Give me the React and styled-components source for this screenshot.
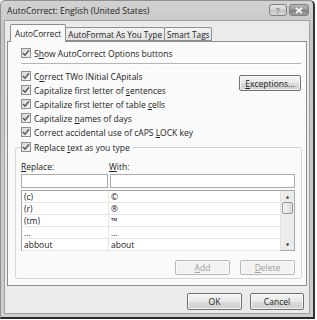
import React from "react";
import styled, { createGlobalStyle } from "styled-components";

const options = [
  { label: <>C<u>o</u>rrect TWo INitial CApitals</> },
  { label: <>Capitalize first letter of <u>s</u>entences</> },
  { label: <>Capitalize first letter of table <u>c</u>ells</> },
  { label: <>Capitalize <u>n</u>ames of days</> },
  { label: <>Correct accidental use of cAPS <u>L</u>OCK key</> },
];

const entries = [
  ["(c)", "©"],
  ["(r)", "®"],
  ["(tm)", "™"],
  ["...", "…"],
  ["abbout", "about"],
];

const Check = () => (
  <CheckBox>
    <svg width="8" height="8" viewBox="0 0 8 8">
      <path d="M1 4 L3 6.2 L7 1.2" fill="none" stroke="#5a5a5a" strokeWidth="1.5" />
    </svg>
  </CheckBox>
);

const App = () => {
  return (
    <Window>
      <GlobalStyle />
      <TitleBar>
        <Title>AutoCorrect: English (United States)</Title>
        <TitleButtons>
          <CaptionButton>?</CaptionButton>
          <CaptionButton $close>
            <svg width="8" height="7" viewBox="0 0 8 7">
              <path d="M1 1 L7 6 M7 1 L1 6" stroke="#f4f4f4" strokeWidth="1.8" />
            </svg>
          </CaptionButton>
        </TitleButtons>
      </TitleBar>
      <Body>
        <Tabs>
          <Tab $active>AutoCorrect</Tab>
          <Tab>AutoFormat As You Type</Tab>
          <Tab>Smart Tags</Tab>
        </Tabs>
        <Panel>
          <CheckRow>
            <Check />
            <span>S<u>h</u>ow AutoCorrect Options buttons</span>
          </CheckRow>
          <Separator />
          <OptionsArea>
            <OptionList>
              {options.map((o, i) => (
                <CheckRow key={i}>
                  <Check />
                  <span>{o.label}</span>
                </CheckRow>
              ))}
            </OptionList>
            <Button $w={62} $h={16}><u>E</u>xceptions...</Button>
          </OptionsArea>
          <Group>
            <Legend>
              <Check />
              <span>Replace <u>t</u>ext as you type</span>
            </Legend>
            <Labels>
              <FieldLabel $w={88}><u>R</u>eplace:</FieldLabel>
              <FieldLabel><u>W</u>ith:</FieldLabel>
            </Labels>
            <Inputs>
              <Input $w={87} />
              <Input />
            </Inputs>
            <List>
              <Rows>
                {entries.map(([a, b]) => (
                  <Row key={a}>
                    <Cell $w={87}>{a}</Cell>
                    <Cell>{b}</Cell>
                  </Row>
                ))}
              </Rows>
              <ScrollBar>
                <Arrow>▲</Arrow>
                <Thumb />
                <Track />
                <Arrow>▼</Arrow>
              </ScrollBar>
            </List>
            <GroupButtons>
              <Button $w={55} disabled><u>A</u>dd</Button>
              <Button $w={55} disabled><u>D</u>elete</Button>
            </GroupButtons>
          </Group>
        </Panel>
        <Footer>
          <Button $w={55} $h={17}>OK</Button>
          <Button $w={54} $h={17}>Cancel</Button>
        </Footer>
      </Body>
    </Window>
  );
};

const GlobalStyle = createGlobalStyle`
  html, body {
    margin: 0;
    padding: 0;
    background: #fff;
  }
  body {
    font-family: "Open Sans", "DejaVu Sans", sans-serif;
    font-size: 8.5px;
    color: #222;
  }
  u {
    text-decoration-thickness: 1px;
    text-underline-offset: 1px;
  }
`;

const Window = styled.div`
  box-sizing: border-box;
  width: 315px;
  height: 319px;
  display: flex;
  flex-direction: column;
  background: linear-gradient(#d2d2d2, #c6c6c6 30px, #cdcdcd);
  border: 1px solid #909090;
  border-right: 2px solid #333;
  border-bottom: 2px solid #2a2a2a;
  border-radius: 5px 5px 0 0;
  padding: 0 3px 3px 3px;
`;

const TitleBar = styled.div`
  height: 19px;
  display: flex;
  justify-content: space-between;
`;

const Title = styled.div`
  font-size: 8.6px;
  color: #222;
  padding: 4px 0 0 3px;
`;

const TitleButtons = styled.div`
  display: flex;
  gap: 2px;
  margin-top: 3px;
  margin-right: 1px;
`;

const CaptionButton = styled.div`
  box-sizing: border-box;
  width: ${(p) => (p.$close ? 20 : 18)}px;
  height: 12px;
  display: flex;
  align-items: center;
  justify-content: center;
  font-size: 8px;
  font-weight: bold;
  color: #8a8a8a;
  border: 1px solid #808080;
  border-radius: 3px;
  background: ${(p) =>
    p.$close
      ? "linear-gradient(#b8b8b8, #949494 50%, #7e7e7e 51%, #a0a0a0)"
      : "linear-gradient(#e6e6e6, #d0d0d0 50%, #c4c4c4 51%, #d6d6d6)"};
`;

const Body = styled.div`
  flex: 1;
  display: flex;
  flex-direction: column;
  background: #ebebeb;
  border: 1px solid #a0a0a0;
  padding: 3px 2px 0 2px;
`;

const Tabs = styled.div`
  display: flex;
  align-items: flex-end;
  height: 17px;
  padding-left: 5px;
  position: relative;
  z-index: 1;
  font-size: 8.2px;
`;

const Tab = styled.div`
  box-sizing: border-box;
  height: ${(p) => (p.$active ? 18 : 14)}px;
  margin-bottom: ${(p) => (p.$active ? -1 : 0)}px;
  margin-left: ${(p) => (p.$active ? -2 : 0)}px;
  margin-right: -1px;
  padding: ${(p) => (p.$active ? "0 4px 1px" : "0 2px")};
  display: flex;
  align-items: center;
  border: 1px solid #8e8e8e;
  border-bottom: ${(p) => (p.$active ? "none" : "1px solid #8e8e8e")};
  background: ${(p) => (p.$active ? "#fafafa" : "linear-gradient(#f3f3f3, #e2e2e2)")};
  border-radius: 2px 2px 0 0;
  white-space: nowrap;
`;

const Panel = styled.div`
  box-sizing: border-box;
  height: 245px;
  background: #fafafa;
  border: 1px solid #8e8e8e;
  padding: 4px 5px 0 13px;
  display: flex;
  flex-direction: column;
`;

const CheckRow = styled.div`
  display: flex;
  align-items: center;
  gap: 3px;
  height: 14px;
  white-space: nowrap;
`;

const CheckBox = styled.div`
  box-sizing: border-box;
  width: 10px;
  height: 10px;
  flex: none;
  border: 1px solid #8e8e8e;
  background: linear-gradient(135deg, #d8d8d8, #f4f4f4);
  display: flex;
  align-items: center;
  justify-content: center;
`;

const Separator = styled.div`
  height: 1px;
  background: #b4b4b4;
  border-bottom: 1px solid #fff;
  margin: 3px 0 4px 0;
`;

const OptionsArea = styled.div`
  display: flex;
  justify-content: space-between;
  align-items: flex-start;
`;

const OptionList = styled.div`
  display: flex;
  flex-direction: column;
`;

const Button = styled.button`
  box-sizing: border-box;
  width: ${(p) => p.$w}px;
  height: ${(p) => p.$h || 15}px;
  margin-top: ${(p) => (p.$h === 16 ? 6 : 0)}px;
  padding: 0;
  font: inherit;
  color: ${(p) => (p.disabled ? "#a0a0a0" : "#222")};
  border: 1px solid ${(p) => (p.disabled ? "#b8b8b8" : "#707070")};
  border-radius: 2px;
  background: ${(p) =>
    p.disabled
      ? "#f2f2f2"
      : "linear-gradient(#f4f4f4, #e8e8e8 50%, #dadada 51%, #d0d0d0)"};
  box-shadow: inset 0 0 0 1px rgba(255, 255, 255, 0.7);
  display: flex;
  align-items: center;
  justify-content: center;
`;

const Group = styled.div`
  box-sizing: border-box;
  margin: 8px -1px 0 -6px;
  height: 132px;
  border: 1px solid #d6d6d6;
  border-radius: 3px;
  padding: 0 6px 0 5px;
  display: flex;
  flex-direction: column;
`;

const Legend = styled(CheckRow)`
  margin-top: -8px;
  align-self: flex-start;
  background: #fafafa;
  padding-right: 3px;
`;

const Labels = styled.div`
  display: flex;
  margin-top: 6px;
  height: 12px;
  align-items: center;
`;

const FieldLabel = styled.div`
  width: ${(p) => (p.$w ? `${p.$w}px` : "auto")};
`;

const Inputs = styled.div`
  display: flex;
  gap: 2px;
  margin-top: 2px;
`;

const Input = styled.div`
  box-sizing: border-box;
  height: 14px;
  width: ${(p) => (p.$w ? `${p.$w}px` : "auto")};
  flex: ${(p) => (p.$w ? "none" : 1)};
  border: 1px solid #ababab;
  background: #fff;
`;

const List = styled.div`
  box-sizing: border-box;
  display: flex;
  height: 61px;
  margin-top: 2px;
  border: 1px solid #a8a8a8;
  background: #fff;
`;

const Rows = styled.div`
  flex: 1;
  display: flex;
  flex-direction: column;
`;

const Row = styled.div`
  display: flex;
  height: 12px;
  border-bottom: 1px solid #e6e6e6;
  box-sizing: border-box;
`;

const Cell = styled.div`
  box-sizing: border-box;
  width: ${(p) => (p.$w ? `${p.$w}px` : "auto")};
  flex: ${(p) => (p.$w ? "none" : 1)};
  padding-left: 2px;
  line-height: 11px;
  border-right: ${(p) => (p.$w ? "1px solid #e6e6e6" : "none")};
`;

const ScrollBar = styled.div`
  width: 13px;
  display: flex;
  flex-direction: column;
  background: #ececec;
  border-left: 1px solid #e2e2e2;
`;

const Arrow = styled.div`
  height: 11px;
  display: flex;
  align-items: center;
  justify-content: center;
  font-size: 4px;
  color: #333;
`;

const Thumb = styled.div`
  box-sizing: border-box;
  height: 12px;
  margin: 0 1px;
  border: 1px solid #9a9a9a;
  border-radius: 2px;
  background: linear-gradient(90deg, #f4f4f4, #dadada);
`;

const Track = styled.div`
  flex: 1;
`;

const GroupButtons = styled.div`
  display: flex;
  justify-content: flex-end;
  gap: 10px;
  margin-top: 9px;
`;

const Footer = styled.div`
  display: flex;
  justify-content: flex-end;
  gap: 8px;
  padding: 7px 3px 0 0;
`;

export default App;
